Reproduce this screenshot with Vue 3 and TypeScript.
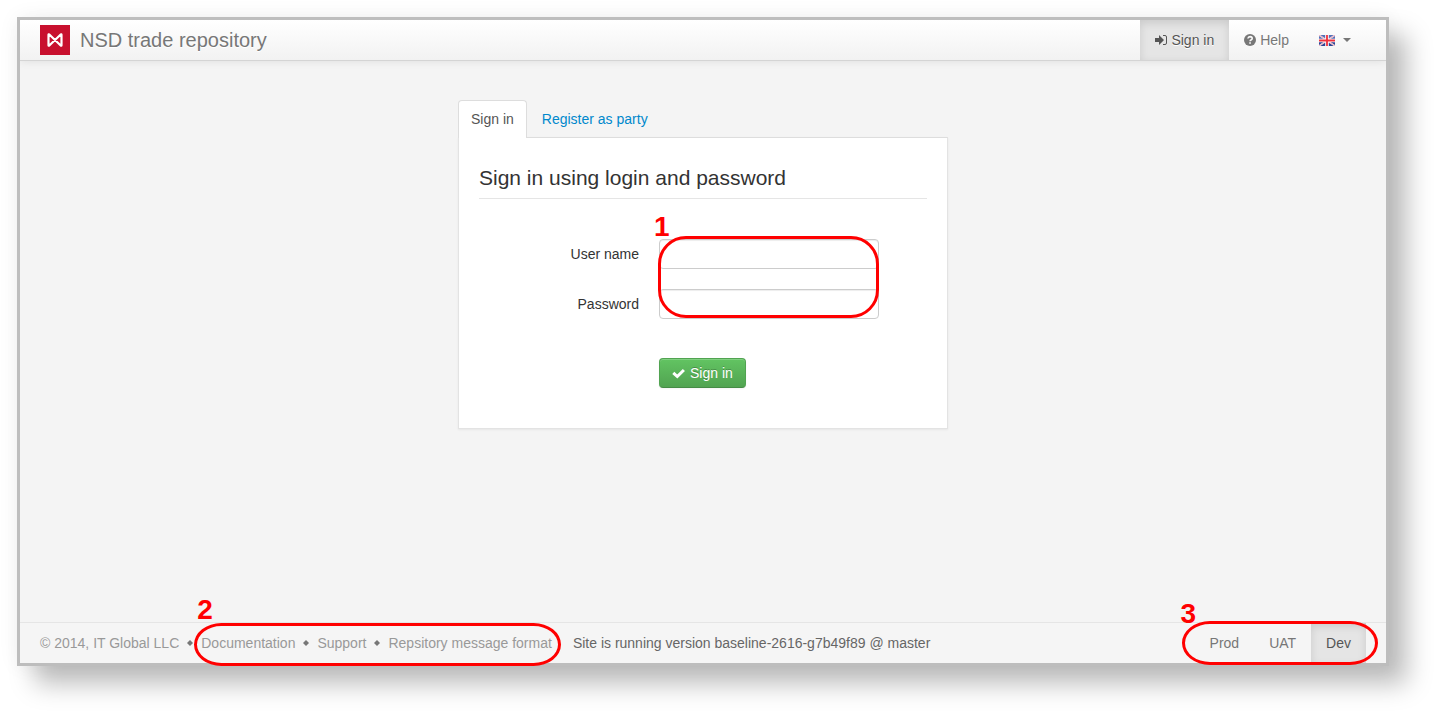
<script setup lang="ts">
import { ref } from 'vue'

interface FooterLink {
  label: string
}

interface EnvironmentLink {
  label: string
  active: boolean
}

const userName = ref('')
const password = ref('')

const footerLinks: FooterLink[] = [
  { label: 'Documentation' },
  { label: 'Support' },
  { label: 'Repsitory message format' },
]

const environments: EnvironmentLink[] = [
  { label: 'Prod', active: false },
  { label: 'UAT', active: false },
  { label: 'Dev', active: true },
]
</script>

<template>
  <div class="canvas">
    <div class="window">
      <header class="navbar">
        <a class="brand" href="#">
          <svg class="brand-logo" viewBox="0 0 30 30" aria-hidden="true">
            <rect width="30" height="30" fill="#c8102e" />
            <path
              d="M8.500 9.800v10.400q0 .8.800.3L20.700 9.500q.8-.5.8.3v10.400q0 .8-.8.300L9.300 9.500q-.8-.5-.8.300z"
              fill="none"
              stroke="#fff"
              stroke-width="2.200"
              stroke-linejoin="round"
            />
          </svg>
          <span>NSD trade repository</span>
        </a>
        <nav class="nav">
          <a class="nav-item active" href="#">
            <svg class="icon" viewBox="0 0 12 12" aria-hidden="true">
              <path d="M0 4h4V1l5 5-5 5V8H0z" fill="currentColor" />
              <path d="M8 1.500h2a1.500 1.500 0 0 1 1.500 1.500v6a1.500 1.500 0 0 1-1.500 1.500H8" fill="none" stroke="currentColor" />
            </svg>
            <span>Sign in</span>
          </a>
          <a class="nav-item" href="#">
            <svg class="icon" viewBox="0 0 12 12" aria-hidden="true">
              <circle cx="6" cy="6" r="6" fill="currentColor" />
              <path d="M3.900 4.500Q4.200 2.600 6.100 2.600q2.100.1 2.100 1.800 0 1-1.200 1.600-.9.500-.9 1.200" fill="none" stroke="#fafafa" stroke-width="1.600" />
              <path d="M5.200 8.200h1.700v1.600H5.200z" fill="#fafafa" />
            </svg>
            <span>Help</span>
          </a>
          <button class="nav-item language" type="button" aria-label="Language">
            <svg class="flag" viewBox="0 0 16 11" aria-hidden="true">
              <rect width="16" height="11" fill="#2c4494" />
              <path d="M0 0h16v4H0z" fill="#5470b8" />
              <path d="M0 0l16 11M16 0L0 11" stroke="#f3dfe6" stroke-width="1.500" />
              <path d="M0 0l16 11M16 0L0 11" stroke="#ec8f9d" stroke-width=".6" />
              <path d="M8 0v11M0 5.500h16" stroke="#fff" stroke-width="3.600" />
              <path d="M8 0v11M0 5.500h16" stroke="#f0303c" stroke-width="1.800" />
            </svg>
            <svg class="caret" viewBox="0 0 8 4" aria-hidden="true">
              <path d="M0 0h8L4 4z" fill="currentColor" />
            </svg>
          </button>
        </nav>
      </header>

      <main class="content">
        <section class="login">
          <nav class="tabs">
            <a class="tab selected" href="#">Sign in</a>
            <a class="tab" href="#">Register as party</a>
          </nav>
          <form class="panel" @submit.prevent>
            <h1 class="title">Sign in using login and password</h1>
            <div class="fields">
              <label class="label" for="user-name">User name</label>
              <input id="user-name" v-model="userName" class="field" type="text" />
              <label class="label" for="password">Password</label>
              <input id="password" v-model="password" class="field" type="password" />
              <span class="ring ring-fields"></span>
              <strong class="mark mark-fields">1</strong>
            </div>
            <button class="submit" type="submit">
              <svg class="icon" viewBox="0 0 13 12" aria-hidden="true">
                <path d="M1.300 5.800l4 3.700 6.600-6.500" fill="none" stroke="currentColor" stroke-width="3" />
              </svg>
              <span>Sign in</span>
            </button>
          </form>
        </section>
      </main>

      <footer class="footer">
        <span class="copyright">© 2014, IT Global LLC</span>
        <ul class="links">
          <li v-for="link in footerLinks" :key="link.label">
            <svg class="bullet" viewBox="0 0 6 6" aria-hidden="true">
              <path d="M3 0l3 3-3 3-3-3z" fill="currentColor" />
            </svg>
            <a href="#">{{ link.label }}</a>
          </li>
          <li aria-hidden="true">
            <span class="ring ring-links"></span>
            <strong class="mark mark-links">2</strong>
          </li>
        </ul>
        <span class="version">Site is running version baseline-2616-g7b49f89 @ master</span>
        <nav class="environments">
          <a
            v-for="env in environments"
            :key="env.label"
            class="environment"
            :class="{ active: env.active }"
            href="#"
          >{{ env.label }}</a>
          <span class="ring ring-environments"></span>
          <strong class="mark mark-environments">3</strong>
        </nav>
      </footer>
    </div>
  </div>
</template>

<style>
body {
  margin: 0;
  background: #fff;
}
</style>

<style scoped>
.canvas {
  display: flex;
  box-sizing: border-box;
  min-height: 100vh;
  padding: 17px 48px 48px 17px;
  overflow: hidden;
  color: #333;
  font: 14px/20px "Liberation Sans", Arial, sans-serif;
}

.window {
  display: flex;
  flex: 1;
  flex-direction: column;
  border: 3px solid #bdbdbd;
  background: #f4f4f4;
  box-shadow: 18px 18px 24px rgba(0, 0, 0, 0.26), 0 0 20px rgba(0, 0, 0, 0.06);
}

a {
  color: inherit;
  text-decoration: none;
}

.navbar {
  display: flex;
  justify-content: space-between;
  height: 40px;
  padding: 0 20px;
  border-bottom: 1px solid #d4d4d4;
  background: linear-gradient(#fff, #f2f2f2);
  box-shadow: 0 1px 8px rgba(0, 0, 0, 0.08);
  clip-path: inset(0 0 -12px 0);
  color: #777;
  text-shadow: 0 1px 0 #fff;
}

.brand {
  display: flex;
  align-items: center;
  gap: 10px;
  font-size: 20px;
}

.brand-logo {
  width: 30px;
  height: 30px;
}

.nav {
  display: flex;
}

.nav-item {
  display: flex;
  align-items: center;
  gap: 4px;
  padding: 0 15px;
  border: 0;
  background: none;
  color: #777;
  font: inherit;
}

.nav-item.active,
.environment.active {
  background: #e5e5e5;
  box-shadow: inset 0 3px 8px rgba(0, 0, 0, 0.12);
  color: #555;
}

.icon {
  height: 12px;
}

.nav-item.language {
  gap: 8px;
}

.flag {
  width: 16px;
  height: 11px;
}

.caret {
  width: 8px;
  height: 4px;
}

.content {
  display: flex;
  flex: 1;
  align-items: flex-start;
  justify-content: center;
  padding-top: 39px;
}

.login {
  width: 490px;
}

.tabs {
  display: flex;
  gap: 2px;
}

.tab {
  padding: 8px 12px;
  border: 1px solid transparent;
  border-bottom: 0;
  color: #0088cc;
}

.tab.selected {
  z-index: 1;
  margin-bottom: -1px;
  padding-bottom: 9px;
  border-color: #ddd;
  border-radius: 4px 4px 0 0;
  background: #fff;
  color: #555;
}

.panel {
  padding: 30px 20px 40px;
  border: 1px solid #ddd;
  border-color: #ddd #e3e3e3 #e3e3e3;
  background: #fff;
  box-shadow: 0 1px 2px rgba(0, 0, 0, 0.06);
}

.title {
  margin: 0 0 40px;
  padding-bottom: 10px;
  border-bottom: 1px solid #e5e5e5;
  font-size: 21px;
  font-weight: normal;
  line-height: 20px;
}

.fields {
  position: relative;
  display: grid;
  grid-template-columns: 160px 220px;
  gap: 20px;
  align-items: center;
}

.label {
  text-align: right;
}

.field {
  box-sizing: border-box;
  width: 100%;
  height: 30px;
  padding: 4px 6px;
  border: 1px solid #ccc;
  border-radius: 4px;
  outline: 0;
  background: #fff;
  box-shadow: inset 0 1px 1px rgba(0, 0, 0, 0.075);
  color: #555;
  font: inherit;
}

.submit {
  display: flex;
  align-items: center;
  gap: 5px;
  height: 30px;
  margin: 39px 0 0 180px;
  padding: 0 12px;
  border: 1px solid;
  border-color: #51a351 #51a351 #458b45;
  border-radius: 4px;
  background: linear-gradient(#62c462, #51a351);
  box-shadow: inset 0 1px 0 rgba(255, 255, 255, 0.2), 0 1px 2px rgba(0, 0, 0, 0.05);
  color: #fff;
  font: inherit;
  text-shadow: 0 -1px 0 rgba(0, 0, 0, 0.25);
}

.footer {
  display: flex;
  align-items: center;
  height: 40px;
  padding: 0 20px;
  border-top: 1px solid #e5e5e5;
  background: #f5f5f5;
  color: #777;
}

.copyright,
.links {
  color: #999;
}

.links {
  position: relative;
  display: flex;
  margin: 0 21px 0 0;
  padding: 0;
  list-style: none;
}

.links li {
  display: flex;
  align-items: center;
}

.bullet {
  width: 6px;
  height: 6px;
  margin: 0 8px;
  color: #777;
}

.version {
  color: #666;
}

.environments {
  position: relative;
  display: flex;
  align-self: stretch;
  margin-left: auto;
}

.environment {
  display: flex;
  align-items: center;
  padding: 0 15px;
}

.ring {
  position: absolute;
  box-sizing: border-box;
  border: 3px solid #f00;
  pointer-events: none;
}

.mark {
  position: absolute;
  color: #f00;
  font-size: 28px;
  line-height: 28px;
}

.ring-fields {
  top: -3px;
  left: 179px;
  width: 221px;
  height: 82px;
  border-radius: 28px;
}

.mark-fields {
  top: -26px;
  left: 175px;
}

.ring-links {
  top: -10px;
  right: -9px;
  left: 15px;
  height: 43px;
  border-radius: 28px / 22px;
}

.mark-links {
  top: -37px;
  left: 18px;
}

.ring-environments {
  top: -2px;
  right: -12px;
  left: -13px;
  height: 44px;
  border-radius: 28px / 22px;
}

.mark-environments {
  top: -23px;
  left: -14px;
}
</style>
